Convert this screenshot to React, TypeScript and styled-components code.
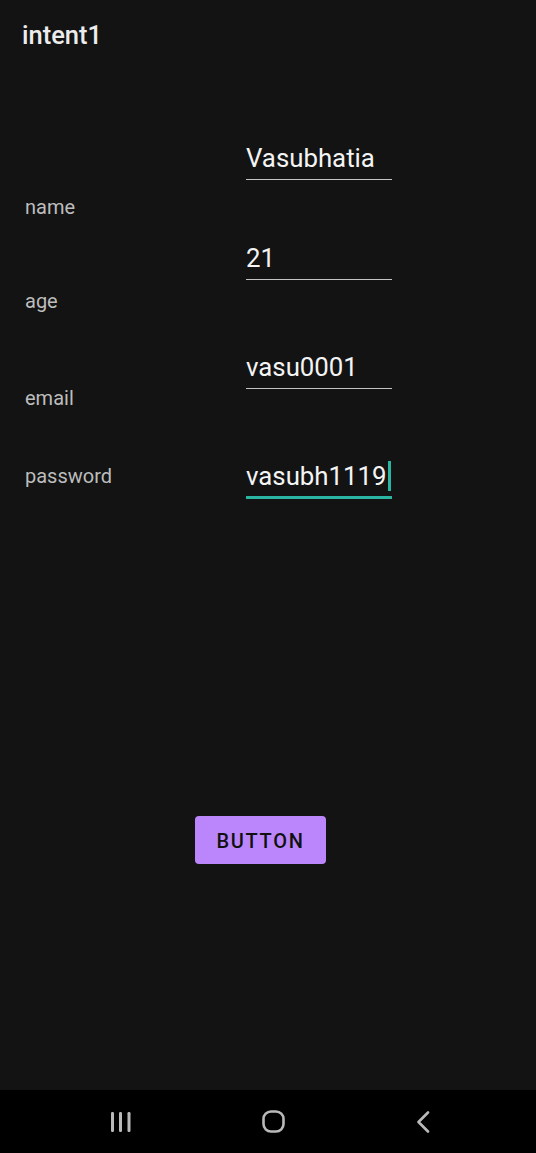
import React from "react";
import styled, { createGlobalStyle } from "styled-components";

const Global = createGlobalStyle`
  html, body { margin: 0; padding: 0; background: #131313; }
  body { font-family: Roboto, "Noto Sans", "Liberation Sans", sans-serif; }
  * { box-sizing: border-box; }
`;

const Screen = styled.div`
  width: 536px;
  height: 1153px;
  display: flex;
  flex-direction: column;
  background: #131313;
  overflow: hidden;
`;

const Content = styled.div`
  flex: 1;
  display: flex;
  flex-direction: column;
`;

const TitleBar = styled.header`
  height: 70px;
  padding: 20px 0 0 22px;
  display: flex;
  align-items: flex-start;
`;

const Title = styled.h1`
  margin: 0;
  font-size: 25.5px;
  line-height: 30px;
  font-weight: 500;
  color: #ececec;
`;

const Form = styled.div`
  display: flex;
  flex-direction: column;
  padding-left: 25px;
`;

const Row = styled.div<{ $top: number }>`
  display: grid;
  grid-template-columns: 221px 146px;
  align-items: start;
  margin-top: ${(p) => p.$top}px;
`;

const Label = styled.span<{ $offset: number }>`
  margin-top: ${(p) => p.$offset}px;
  font-size: 20px;
  line-height: 24px;
  color: #bdbdbd;
`;

const Field = styled.div<{ $focused?: boolean }>`
  height: ${(p) => (p.$focused ? 38 : 37)}px;
  padding-bottom: 5px;
  font-size: 25.8px;
  line-height: 30px;
  color: #f4f4f4;
  border-bottom: ${(p) => (p.$focused ? "3px solid #2ab4a2" : "1.5px solid #c4c4c4")};
  white-space: nowrap;
  display: flex;
  align-items: flex-start;
`;

const Caret = styled.span`
  display: inline-block;
  width: 3px;
  height: 30px;
  margin-left: 1px;
  background: #2ab4a2;
`;

const ButtonArea = styled.div`
  display: flex;
  padding: 317px 0 0 195px;
`;

const Button = styled.button`
  width: 131px;
  height: 48px;
  border: none;
  border-radius: 4px;
  background: #bb86fc;
  color: #111;
  font-family: Roboto, "Noto Sans", sans-serif;
  font-size: 20px;
  font-weight: 500;
  letter-spacing: 1.7px;
  padding: 2px 0 0;
  cursor: pointer;
`;

const NavBar = styled.nav`
  height: 63px;
  background: #000;
  display: flex;
  align-items: center;
  justify-content: space-between;
  padding: 0 106px 0 110px;
`;

const NavButton = styled.span`
  display: flex;
  align-items: center;
  justify-content: center;
  color: #b9b9b9;
`;

function RecentsIcon() {
  return (
    <svg width="21" height="20" viewBox="0 0 21 20">
      <rect x="1" y="0" width="3" height="20" rx="1.2" fill="currentColor" />
      <rect x="9" y="0" width="3" height="20" rx="1.2" fill="currentColor" />
      <rect x="17.5" y="0" width="3" height="20" rx="1.2" fill="currentColor" />
    </svg>
  );
}

function HomeIcon() {
  return (
    <svg width="23" height="23" viewBox="0 0 23 23">
      <rect x="1.5" y="1.5" width="20" height="20" rx="7.5" fill="none" stroke="currentColor" strokeWidth="2.6" />
    </svg>
  );
}

function BackIcon() {
  return (
    <svg width="14" height="22" viewBox="0 0 14 22">
      <path d="M12 1.5 L2.5 11 L12 20.5" fill="none" stroke="currentColor" strokeWidth="2.6" strokeLinecap="round" strokeLinejoin="round" />
    </svg>
  );
}

export default function App() {
  return (
    <>
      <Global />
      <Screen>
        <Content>
          <TitleBar>
            <Title>intent1</Title>
          </TitleBar>
          <Form>
            <Row $top={73}>
              <Label $offset={52}>name</Label>
              <Field>Vasubhatia</Field>
            </Row>
            <Row $top={24}>
              <Label $offset={46}>age</Label>
              <Field>21</Field>
            </Row>
            <Row $top={39}>
              <Label $offset={34}>email</Label>
              <Field>vasu0001</Field>
            </Row>
            <Row $top={51}>
              <Label $offset={3}>password</Label>
              <Field $focused>
                vasubh1119
                <Caret />
              </Field>
            </Row>
          </Form>
          <ButtonArea>
            <Button>BUTTON</Button>
          </ButtonArea>
        </Content>
        <NavBar>
          <NavButton>
            <RecentsIcon />
          </NavButton>
          <NavButton>
            <HomeIcon />
          </NavButton>
          <NavButton>
            <BackIcon />
          </NavButton>
        </NavBar>
      </Screen>
    </>
  );
}
